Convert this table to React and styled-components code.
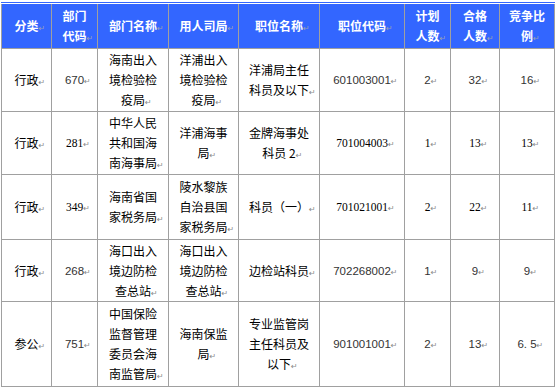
import React from 'react'
import styled, { createGlobalStyle } from 'styled-components';

const GlobalStyle = createGlobalStyle`
    body{
        margin: 0;
        background: #fff;
        font-family: "Noto Sans CJK SC", "Noto Sans", sans-serif;
    }
`;

const columns = [49, 45, 70, 69, 80, 84, 45, 48, 54]
const rowHeights = [44, 62, 62, 64, 61, 84]

const headers = ['分类', '部门\n代码', '部门名称', '用人司局', '职位名称', '职位代码', '计划\n人数', '合格\n人数', '竞争比\n例']

const rows = [
    { digits: 'sans', cells: ['行政', '670', '海南出入\n境检验检\n疫局', '洋浦出入\n境检验检\n疫局', '洋浦局主任\n科员及以下', '601003001', '2', '32', '16'] },
    { digits: 'serif', cells: ['行政', '281', '中华人民\n共和国海\n南海事局', '洋浦海事\n局', '金牌海事处\n科员 2', '701004003', '1', '13', '13'] },
    { digits: 'serif', cells: ['行政', '349', '海南省国\n家税务局', '陵水黎族\n自治县国\n家税务局', '科员（一）', '701021001', '2', '22', '11'] },
    { digits: 'sans', cells: ['行政', '268', '海口出入\n境边防检\n查总站', '海口出入\n境边防检\n查总站', '边检站科员', '702268002', '1', '9', '9'] },
    { digits: 'sans', cells: ['参公', '751', '中国保险\n监督管理\n委员会海\n南监管局', '海南保监\n局', '专业监管岗\n主任科员及\n以下', '901001001', '2', '13', '6. 5'] },
]

const isNumber = (text) => /^[0-9. ]+$/.test(text)

function App() {
  return (
    <PageStyled>
        <GlobalStyle />
        <TopRule />
        <Grid>
            {headers.map((h, i) => (
                <HeadCell key={'h' + i}>
                    <span>{h}<Mark $light>↵</Mark></span>
                </HeadCell>
            ))}
            {rows.map((row, r) => row.cells.map((text, c) => (
                <Cell key={r + '-' + c} $digits={isNumber(text) ? row.digits : null}>
                    <span>{text}<Mark>↵</Mark></span>
                </Cell>
            )))}
        </Grid>
    </PageStyled>
  )
}

export default App

const PageStyled = styled.div`
    width: 557px;
    height: 387px;
    padding: 2px 0 0 1px;
    box-sizing: border-box;
    overflow: hidden;
`;

const TopRule = styled.div`
    width: 554px;
    height: 1px;
    background: #3366ff;
    margin-bottom: 1px;
`;

const Grid = styled.div`
    display: grid;
    grid-template-columns: ${columns.map(w => w + 'px').join(' ')};
    grid-template-rows: ${rowHeights.map(h => h + 'px').join(' ')};
    gap: 1px;
    width: 554px;
    box-sizing: border-box;
    padding: 0 1px 1px 1px;
    background: #a0a0a0;
`;

const HeadCell = styled.div`
    display: flex;
    align-items: center;
    justify-content: center;
    background: #3366ff;
    color: #fff;
    font-weight: 700;
    font-size: 12px;
    line-height: 20px;
    text-align: center;
    white-space: pre-line;
`;

const Cell = styled.div`
    display: flex;
    align-items: center;
    justify-content: center;
    background: #fff;
    color: ${p => p.$digits === 'sans' ? '#333' : '#000'};
    font-family: ${p => p.$digits === 'sans'
        ? '"Liberation Sans", Arial, sans-serif'
        : p.$digits === 'serif'
            ? '"Liberation Serif", serif'
            : '"Noto Sans CJK SC", sans-serif'};
    font-size: ${p => p.$digits ? '11.5px' : '12px'};
    line-height: 20px;
    text-align: center;
    white-space: pre-line;
`;

const Mark = styled.span`
    display: inline-block;
    width: 0;
    white-space: nowrap;
    font-family: "DejaVu Sans", sans-serif;
    font-weight: 400;
    font-size: 8px;
    line-height: 1;
    color: ${p => p.$light ? '#9aa0b0' : '#8a8a8a'};
`;
